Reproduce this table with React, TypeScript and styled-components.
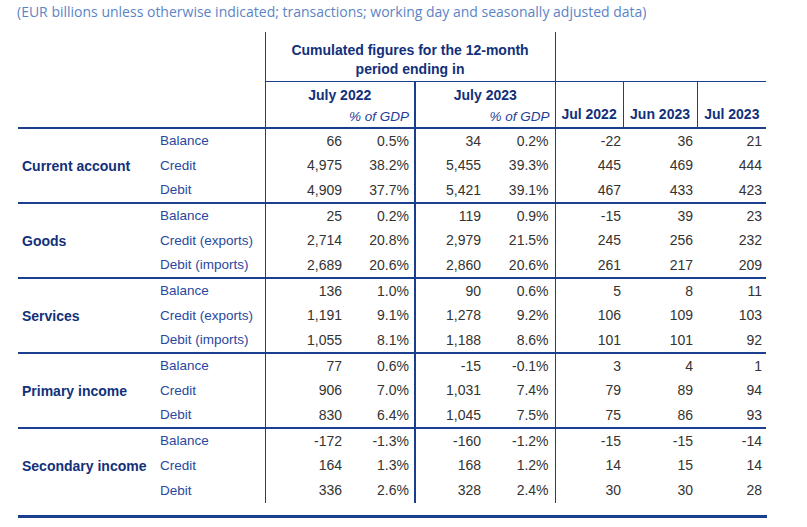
import React from "react";
import styled, { createGlobalStyle } from "styled-components";

const Global = createGlobalStyle`
  html, body { margin: 0; padding: 0; background: #ffffff; }
  body { font-family: "Liberation Sans", Arial, sans-serif; }
`;

const LINE = "#1b3f8f";

const Page = styled.div`
  width: 807px;
  height: 527px;
  padding: 0 0 0 18px;
  box-sizing: border-box;
  overflow: hidden;
`;

const Caption = styled.div`
  font-family: "Open Sans", sans-serif;
  font-size: 14px;
  line-height: 20px;
  color: #5b84c6;
  margin: 2px 0 10px -1px;
  white-space: nowrap;
`;

const Table = styled.table`
  width: 748px;
  table-layout: fixed;
  border-collapse: collapse;
  font-size: 13.5px;
`;

const HeadCell = styled.th<{ $left?: string; $bottom?: string; $top?: string; $align?: string; $valign?: string; $pad?: string }>`
  font-size: 14px;
  font-weight: bold;
  color: #12307a;
  padding: ${(p) => p.$pad || "0"};
  text-align: ${(p) => p.$align || "center"};
  vertical-align: ${(p) => p.$valign || "middle"};
  border-left: ${(p) => p.$left || "none"};
  border-bottom: ${(p) => p.$bottom || "none"};
  border-top: ${(p) => p.$top || "none"};
  line-height: 19px;
  white-space: nowrap;
`;

const GdpCell = styled.th<{ $left?: string }>`
  font-weight: normal;
  font-style: italic;
  color: #1e3d96;
  text-align: right;
  padding: 0 5px 0 0;
  vertical-align: middle;
  border-left: ${(p) => p.$left || "none"};
  border-bottom: 2px solid ${LINE};
  white-space: nowrap;
`;

const Row = styled.tr<{ $first?: boolean }>`
  height: 25px;
  ${(p) => (p.$first ? `border-top: 2px solid ${LINE};` : "")}
`;

const GroupCell = styled.td`
  font-size: 14px;
  font-weight: bold;
  color: #12307a;
  padding: 0 0 0 4px;
  vertical-align: middle;
  white-space: nowrap;
`;

const LabelCell = styled.td`
  color: #2848a0;
  padding: 0 0 1px 2px;
  white-space: nowrap;
`;

const NumCell = styled.td<{ $pr: number; $left?: string }>`
  font-size: 14px;
  color: #333333;
  text-align: right;
  padding: 0 ${(p) => p.$pr}px 1px 0;
  border-left: ${(p) => p.$left || "none"};
  white-space: nowrap;
`;

const BottomRule = styled.div`
  width: 749px;
  height: 3px;
  background: ${LINE};
  margin-top: 12px;
`;

type Section = { name: string; rows: string[][] };

const sections: Section[] = [
  {
    name: "Current account",
    rows: [
      ["Balance", "66", "0.5%", "34", "0.2%", "-22", "36", "21"],
      ["Credit", "4,975", "38.2%", "5,455", "39.3%", "445", "469", "444"],
      ["Debit", "4,909", "37.7%", "5,421", "39.1%", "467", "433", "423"],
    ],
  },
  {
    name: "Goods",
    rows: [
      ["Balance", "25", "0.2%", "119", "0.9%", "-15", "39", "23"],
      ["Credit (exports)", "2,714", "20.8%", "2,979", "21.5%", "245", "256", "232"],
      ["Debit (imports)", "2,689", "20.6%", "2,860", "20.6%", "261", "217", "209"],
    ],
  },
  {
    name: "Services",
    rows: [
      ["Balance", "136", "1.0%", "90", "0.6%", "5", "8", "11"],
      ["Credit (exports)", "1,191", "9.1%", "1,278", "9.2%", "106", "109", "103"],
      ["Debit (imports)", "1,055", "8.1%", "1,188", "8.6%", "101", "101", "92"],
    ],
  },
  {
    name: "Primary income",
    rows: [
      ["Balance", "77", "0.6%", "-15", "-0.1%", "3", "4", "1"],
      ["Credit", "906", "7.0%", "1,031", "7.4%", "79", "89", "94"],
      ["Debit", "830", "6.4%", "1,045", "7.5%", "75", "86", "93"],
    ],
  },
  {
    name: "Secondary income",
    rows: [
      ["Balance", "-172", "-1.3%", "-160", "-1.2%", "-15", "-15", "-14"],
      ["Credit", "164", "1.3%", "168", "1.2%", "14", "15", "14"],
      ["Debit", "336", "2.6%", "328", "2.4%", "30", "30", "28"],
    ],
  },
];

const colWidths = [140, 107, 81, 69, 70, 70, 68, 74, 69];
const pads = [4, 5, 4, 6, 2, 4, 4];
const thin = `1px solid ${LINE}`;
const thick = `2px solid ${LINE}`;
const lefts: (string | undefined)[] = [thin, undefined, thick, undefined, thin, undefined, undefined];

export default function App() {
  return (
    <Page>
      <Global />
      <Caption>
        (EUR billions unless otherwise indicated; transactions; working day and seasonally adjusted data)
      </Caption>
      <Table>
        <colgroup>
          {colWidths.map((w, i) => (
            <col key={i} style={{ width: w }} />
          ))}
        </colgroup>
        <thead>
          <tr style={{ height: 49 }}>
            <HeadCell colSpan={2} rowSpan={3} $bottom={thick} />
            <HeadCell colSpan={4} $left={thin} $valign="bottom" $pad="0 0 2px 0">
              Cumulated figures for the 12-month
              <br />
              period ending in
            </HeadCell>
            <HeadCell colSpan={3} $left={thin} />
          </tr>
          <tr style={{ height: 25 }}>
            <HeadCell colSpan={2} $left={thin} $top={thin} $valign="bottom" $pad="0 0 1px 0">
              July 2022
            </HeadCell>
            <HeadCell colSpan={2} $left={thick} $top={thin} $valign="bottom" $pad="0 0 1px 0">
              July 2023
            </HeadCell>
            <HeadCell rowSpan={2} $left={thin} $top={thin} $bottom={thick} $valign="bottom" $pad="0 0 3px 0">
              Jul 2022
            </HeadCell>
            <HeadCell rowSpan={2} $left={thin} $top={thin} $bottom={thick} $valign="bottom" $pad="0 0 3px 0">
              Jun 2023
            </HeadCell>
            <HeadCell rowSpan={2} $left={thin} $top={thin} $bottom={thick} $valign="bottom" $pad="0 0 3px 0">
              Jul 2023
            </HeadCell>
          </tr>
          <tr style={{ height: 22 }}>
            <GdpCell colSpan={2} $left={thin}>% of GDP</GdpCell>
            <GdpCell colSpan={2} $left={thick}>% of GDP</GdpCell>
          </tr>
        </thead>
        <tbody>
          {sections.map((s, si) =>
            s.rows.map((r, ri) => (
              <Row key={`${si}-${ri}`} $first={ri === 0 && si > 0}>
                {ri === 0 && <GroupCell rowSpan={3}>{s.name}</GroupCell>}
                <LabelCell>{r[0]}</LabelCell>
                {r.slice(1).map((v, ci) => (
                  <NumCell key={ci} $pr={pads[ci]} $left={lefts[ci]}>
                    {v}
                  </NumCell>
                ))}
              </Row>
            ))
          )}
        </tbody>
      </Table>
      <BottomRule />
    </Page>
  );
}
